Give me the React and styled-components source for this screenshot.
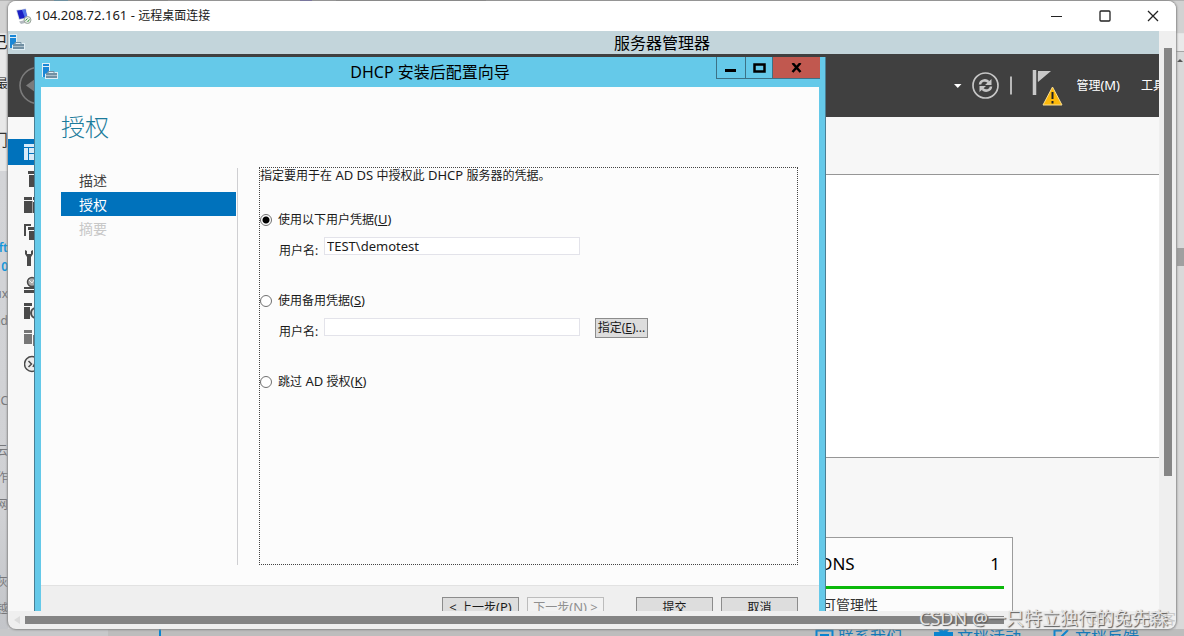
import React from "react";
import styled, { createGlobalStyle } from "styled-components";

const Global = createGlobalStyle`
  * { box-sizing: border-box; }
  html, body { margin: 0; padding: 0; }
  body, button, input {
    font-family: "Noto Sans", "Noto Sans CJK SC", sans-serif;
    font-size: 12px;
    line-height: 16px;
    color: #1a1a1a;
  }
  button { padding: 0; border: 0; background: none; }
  svg { display: block; flex: none; }
`;

const Latin = styled.span`
  font-size: 13px;
  line-height: 12px;
`;

const Desktop = styled.div`
  position: relative;
  display: flex;
  flex-direction: column;
  justify-content: space-between;
  height: 100vh;
  overflow: hidden;
  background: #d0d1d4;
`;

/* ---------- browser page behind the window ---------- */
const TabStrip = styled.div`
  display: flex;
  gap: 24px;
  height: 34px;
  padding-left: 54px;
  background: linear-gradient(#b4b4b4 1px, #d2d2d2 1px);
  border-bottom: 1px solid #e4e4e4;
`;
const TabMark = styled.i`
  width: ${(p) => p.$w}px;
  height: 2px;
  background: ${(p) => p.$c};
`;
const PageBody = styled.div`
  flex: 1;
  display: flex;
  justify-content: space-between;
  align-items: flex-start;
`;
const PageEdge = styled.div`
  width: 8px;
  overflow: hidden;
  white-space: nowrap;
  background: linear-gradient(#e8e8e8 137px, #d3d4d7 137px, #d0d1d4 480px, #c3c5c9);
  height: 100%;
  display: flex;
  flex-direction: column;
`;
const EdgeWord = styled.span`
  display: flex;
  justify-content: flex-end;
  flex: none;
  height: ${(p) => p.$h || 27}px;
  font-size: ${(p) => p.$s || 12}px;
  font-weight: ${(p) => (p.$b ? 600 : 400)};
  color: ${(p) => p.$c || "#77787b"};
`;
const RightEdge = styled.div`
  width: 8px;
  height: 100%;
  display: flex;
  flex-direction: column;
  align-items: center;
  background: linear-gradient(#e9e9e9 17px, #a5a5a5 17px, #a5a5a5 18px, #d9d9d9 18px);
`;
const EdgeArrow = styled.i`
  margin-top: 25px;
  border: 3px solid transparent;
  border-top: 0;
  border-bottom-color: #555;
`;
const EdgeThumb = styled.i`
  width: 7px;
  height: 18px;
  margin-top: 186px;
  background: #a0a0a0;
`;
const PageFoot = styled.div`
  display: flex;
  justify-content: flex-end;
  gap: 32px;
  height: 7px;
  overflow: visible;
  padding-right: 45px;
  background: linear-gradient(90deg, #c7c8ca 108px, #bdbdbd 108px);
`;
const FootMark = styled.i`
  width: 2px;
  margin-right: auto;
  margin-left: 159px;
  background: #0a84cf;
`;
const FootLink = styled.a`
  display: flex;
  align-items: flex-start;
  gap: 4px;
  color: #1479b8;
  font-size: 16px;
  line-height: 16px;
  text-decoration: none;
`;

/* ---------- remote desktop window ---------- */
const RdpWindow = styled.section`
  position: absolute;
  inset: 1px 8px 7px 8px;
  display: flex;
  flex-direction: column;
  overflow: hidden;
  border-radius: 8px;
  background: #efefef;
  box-shadow: 0 0 2px 1px #8b8b8b;
`;
const RdpBar = styled.header`
  display: flex;
  align-items: center;
  gap: 3px;
  height: 30px;
  flex: none;
  padding: 0 17px 0 7px;
  background: #fff;
`;
const RdpTitle = styled.span`
  flex: 1;
`;
const RdpControls = styled.div`
  display: flex;
  gap: 36px;
`;
const IconButton = styled.button`
  display: flex;
  align-items: center;
  justify-content: center;
`;
const RdpMain = styled.div`
  flex: 1;
  display: flex;
  min-height: 0;
`;
const VTrack = styled.div`
  width: 17px;
  flex: none;
  display: flex;
  justify-content: center;
  padding: 17px 0 0 1px;
  background: #efefef;
`;
const VThumb = styled.i`
  width: 8px;
  height: 76%;
  background: #868686;
`;
const HTrack = styled.div`
  display: flex;
  align-items: center;
  gap: 5px;
  height: 18px;
  flex: none;
  padding: 0 172px 0 5px;
`;
const HThumb = styled.i`
  flex: 1;
  height: 8px;
  background: #848484;
`;

/* ---------- server manager ---------- */
const Remote = styled.div`
  position: relative;
  flex: 1;
  display: flex;
  flex-direction: column;
  min-width: 0;
  overflow: hidden;
  background: #f7f7f7;
`;
const ManagerBar = styled.header`
  display: flex;
  align-items: center;
  height: 23px;
  flex: none;
  padding-left: 1px;
  background: #c3d5db;
`;
const ManagerTitle = styled.h1`
  flex: 1;
  margin: 0;
  padding-left: 139px;
  text-align: center;
  font-size: 16px;
  line-height: 22px;
  font-weight: 400;
  color: #000;
`;
const Toolbar = styled.nav`
  display: flex;
  align-items: center;
  justify-content: flex-end;
  height: 63px;
  flex: none;
  overflow: hidden;
  background: #404040;
  color: #fff;
`;
const BackSlot = styled.span`
  margin-right: auto;
  padding-left: 11px;
`;
const FlagSlot = styled.span`
  margin: 4px 13px 0 18px;
`;
const Menu = styled.button`
  flex: none;
  color: #fff;
  font-size: 12px;
  margin-right: 21px;
`;
const ClippedMenu = styled(Menu)`
  width: 18px;
  margin-right: 0;
  overflow: hidden;
  white-space: nowrap;
  text-align: left;
`;
const ManagerBody = styled.div`
  flex: 1;
  display: flex;
  min-height: 0;
`;
const SideNav = styled.nav`
  width: 60px;
  flex: none;
  padding-top: 22px;
  background: #f8f8f8;
`;
const NavList = styled.div`
  display: flex;
  flex-direction: column;
  justify-content: space-between;
  height: 238px;
`;
const NavItem = styled.button`
  display: flex;
  align-items: center;
  width: 100%;
  height: 26px;
  padding-left: 16px;
  background: ${(p) => (p.$active ? "#0072bc" : "transparent")};
`;
const Dashboard = styled.main`
  flex: 1;
  display: flex;
  flex-direction: column;
`;
const Welcome = styled.section`
  height: 284px;
  flex: none;
  margin-top: 57px;
  border: solid #969696;
  border-width: 1px 0;
  background: #fff;
`;
const Tiles = styled.section`
  display: flex;
  justify-content: flex-end;
  padding: 79px 146px 0 0;
`;
const Tile = styled.article`
  width: 220px;
  height: 160px;
  flex: none;
  padding: 12px 8px 0 22px;
  border: 1px solid #9b9b9b;
  background: #fcfcfc;
`;
const TileHead = styled.header`
  display: flex;
  justify-content: space-between;
  height: 39px;
  padding: 0 4px;
  border-bottom: 3px solid #0bb80b;
  font-size: 17px;
  line-height: 28px;
  color: #000;
`;
const TileLink = styled.p`
  margin: 6px 0 0 6px;
  font-size: 14px;
  line-height: 20px;
  color: #333;
`;

/* ---------- wizard ---------- */
const Wizard = styled.section`
  position: absolute;
  left: 26px;
  top: 26px;
  bottom: 0;
  width: 792px;
  display: flex;
  flex-direction: column;
  padding: 0 6px;
  background: #65c9e9;
  border: solid #4a7f95;
  border-width: 0 1px;
`;
const WizardBar = styled.header`
  display: flex;
  align-items: flex-start;
  height: 30px;
  flex: none;
  padding-left: 1px;
  margin-right: -1px;
`;
const WizardIcon = styled.span`
  padding-top: 6px;
`;
const WizardTitle = styled.h2`
  flex: 1;
  margin: 0;
  padding-left: 85px;
  text-align: center;
  font-size: 16px;
  line-height: 30px;
  font-weight: 400;
  color: #000;
`;
const WinControl = styled.button`
  display: flex;
  align-items: center;
  justify-content: center;
  width: ${(p) => p.$w}px;
  height: 22px;
  background: ${(p) => (p.$close ? "#c1584f" : "transparent")};
  border: solid #3c7286;
  border-width: 0 0 1px 1px;
`;
const Sheet = styled.div`
  flex: 1;
  display: flex;
  flex-direction: column;
  min-height: 0;
  background: #fcfcfc;
`;
const SheetTitle = styled.h3`
  margin: 20px 0 0 20px;
  font-size: 24px;
  line-height: 40px;
  font-weight: 300;
  color: #1b7b9b;
`;
const SheetBody = styled.div`
  flex: 1;
  display: flex;
  min-height: 0;
  padding: 20px 21px 20px 20px;
`;
const Steps = styled.ol`
  width: 177px;
  flex: none;
  margin: 1px 21px 0 0;
  padding: 0 1px 0 0;
  list-style: none;
  border-right: 1px solid #cfcfd2;
`;
const Step = styled.li`
  height: 24px;
  padding-left: 18px;
  font-size: 14px;
  line-height: 25px;
  color: ${(p) => (p.$active ? "#fff" : p.$off ? "#c8c8c8" : "#444")};
  background: ${(p) => (p.$active ? "#0072bc" : "transparent")};
`;
const Form = styled.form`
  flex: 1;
  border: 1px dotted #444;
`;
const Intro = styled.p`
  margin: 0 0 27px;
`;
const Choice = styled.label`
  display: flex;
  align-items: center;
  gap: 6px;
  height: 18px;
`;
const Radio = styled.input`
  appearance: none;
  width: 12px;
  height: 12px;
  margin: 0;
  border: 1px solid #707070;
  border-radius: 50%;
  background: #fff;
  &:checked { background: radial-gradient(#000 3px, #fff 4px); }
`;
const Field = styled.div`
  display: flex;
  align-items: flex-start;
  height: 63px;
  padding: 8px 0 0 19px;
`;
const FieldLabel = styled.label`
  width: 45px;
  padding-top: 6px;
`;
const TextBox = styled.input`
  width: 256px;
  height: 18px;
  padding: 0 2px;
  border: 1px solid #e3e3ea;
  background: #fff;
  font-size: 13px;
  line-height: 16px;
`;
const PushButton = styled.button`
  width: ${(p) => p.$w}px;
  height: ${(p) => p.$h}px;
  border: 1px solid #8c8c8c;
  background: #dddddd;
  white-space: nowrap;
  &:disabled { color: #8f8f8f; background: #f2f2f2; border-color: #bcbcbc; }
`;
const SpecifyWrap = styled.span`
  margin-left: 15px;
`;
const WizardFoot = styled.footer`
  display: flex;
  justify-content: flex-end;
  gap: 8px;
  height: 26px;
  flex: none;
  overflow: hidden;
  padding: 11px 21px 0;
  border-top: 1px solid #e2e2e2;
  background: #efefef;
`;
const Spacer = styled.span`
  width: 16px;
`;
const Watermark = styled.div`
  position: absolute;
  right: ${(p) => p.$r}px;
  bottom: ${(p) => p.$b}px;
  font-size: ${(p) => p.$s}px;
  line-height: 24px;
  white-space: nowrap;
  color: ${(p) => p.$c};
  text-shadow: ${(p) => (p.$shadow ? "1px 1px 1px #555" : "none")};
`;

const ServerIcon = () => (
  <svg width="17" height="17" viewBox="0 0 17 17">
    <path d="M0 0h8v9h8v7H3v-2H0z" fill="#dfeef5" />
    <path d="M1 1h6v2H1zM1 4h6v5L3 11v3H1z" fill="#1b87d6" />
    <path d="M4 10h11v5H4z" fill="#7190a3" />
    <path d="M6 10V8.500h6V10" fill="none" stroke="#7190a3" />
    <path d="M4 12.500h11" stroke="#a9bdc9" />
  </svg>
);

const RdpIcon = () => (
  <svg width="17" height="17" viewBox="0 0 17 17">
    <path d="M1 2l10-1.500L13 10l-9 2z" fill="#c9d2e4" />
    <path d="M2 2.500l8.500-1L12 9.500 4.500 11z" fill="#1a1fc4" />
    <path d="M7 2l3.500-.5L12 9.500l-2 .4z" fill="#4f74ea" />
    <path d="M4 13.500l6-1.500 2 2.500-6 1.500z" fill="#b3b9c0" />
    <circle cx="12.500" cy="12" r="3.500" fill="#e3e8e4" stroke="#9aa59c" />
    <path d="M10.500 12.500l2-2m0 3.500l2-2.500" stroke="#3da045" />
  </svg>
);

const BackIcon = () => (
  <svg width="36" height="38" viewBox="0 0 36 38">
    <circle cx="19" cy="18.500" r="18" fill="none" stroke="#7b7b7b" strokeWidth="1.600" />
    <path d="M7 18.500l11-8v16z" fill="#7b7b7b" />
  </svg>
);

const ToolbarIcons = () => (
  <svg width="60" height="28" viewBox="0 0 60 28">
    <path d="M0 12h7.500l-3.750 4z" fill="#fff" />
    <circle cx="31.500" cy="13.500" r="12.500" fill="none" stroke="#c6c6c6" strokeWidth="1.700" />
    <path d="M26 12.500c.3-4 5.500-5.500 8.500-2.500M37 14.500c-.3 4-5.500 5.500-8.500 2.500" fill="none" stroke="#c6c6c6" strokeWidth="2.500" />
    <path d="M37.500 7v6H31zM25.500 20v-6H32z" fill="#c6c6c6" />
    <path d="M57 4.500v18" stroke="#b8b8b8" strokeWidth="2" />
  </svg>
);

const FlagIcon = () => (
  <svg width="31" height="37" viewBox="0 0 31 37">
    <path d="M2.500 1v25" stroke="#c9c9c9" strokeWidth="3.500" />
    <path d="M4 2h15L6 13V2" fill="#c9c9c9" />
    <path d="M5.500 3.500v9" stroke="#555" />
    <path d="M20.500 18L30 36H11z" fill="#fdb90b" stroke="#f7dc92" strokeLinejoin="round" />
    <path d="M20.500 23v7m0 2v2.500" stroke="#222" strokeWidth="2" />
  </svg>
);

const glyphs = [
  { name: "仪表板", art: <path d="M0 1h16v3H0zM0 5h4v12H0zM5 5h5v5H5zM11 5h5v5h-5zM5 11h5v6H5zM11 11h5v6h-5z" fill="#d9ebf8" /> },
  { name: "本地服务器", art: <path d="M4 1h12v3H4zM5 5h11v12H5z" fill="#4a4a4a" /> },
  { name: "所有服务器", art: <path d="M0 1h8v3H0zM9 1h3v3H9zM0 5h8.500v12H0zM9 6h3v11H9z" fill="#4a4a4a" /> },
  { name: "AD DS", art: <path d="M0 1h7v2H2v10H0zM4 4h12v3H4zM5 8h11v9H5z" fill="#4a4a4a" /> },
  { name: "DHCP", art: <path d="M1 1v4l2 3v9h4V8l2-3V1L7 2v3H3V2zM10 13h3v4h-3z" fill="#4a4a4a" /> },
  { name: "DNS", art: <g><path d="M0 11h16v2H0zM0 14h16v3H0z" fill="#4a4a4a" /><circle cx="8" cy="6" r="4.500" fill="#aaa" stroke="#4a4a4a" strokeWidth="1.500" /><path d="M5 4l3 3 2-3" fill="none" stroke="#eee" /></g> },
  { name: "IIS", art: <g><path d="M0 1h8v3H0zM0 5h6v12H0z" fill="#4a4a4a" /><circle cx="12" cy="11" r="5" fill="#ddd" stroke="#4a4a4a" strokeWidth="2" /></g> },
  { name: "NAP", art: <path d="M0 1h8v3H0zM0 5h8v10H0zM9 6h7v11H9z" fill="#777" /> },
  { name: "文件和存储服务", art: <g><circle cx="8" cy="9" r="7.500" fill="#ededed" stroke="#4a4a4a" strokeWidth="1.500" /><path d="M4.500 6l3 3-3 3M9 12l3-6" fill="none" stroke="#4a4a4a" strokeWidth="1.500" /></g> },
];

const NavGlyph = ({ children }) => (
  <svg width="16" height="18" viewBox="0 0 16 18">{children}</svg>
);

const edgeWords = [
  { t: "ft", c: "#1296db", b: true, h: 19 },
  { t: "0", c: "#1296db", b: true },
  { t: "ux" },
  { t: "ad", h: 80 },
  { t: "IC", h: 50 },
  { t: "云" },
  { t: "作" },
  { t: "网", h: 77 },
  { t: "灰" },
  { t: "越" },
];

export default function App() {
  return (
    <>
      <Global />
      <Desktop>
        <TabStrip>
          <TabMark $w={14} $c="#1d9bd7" />
          <TabMark $w={76} $c="#888" />
          <TabMark $w={84} $c="transparent" />
          <TabMark $w={12} $c="#4a3fd0" />
          <TabMark $w={150} $c="#888" />
        </TabStrip>
        <PageBody>
          <PageEdge>
            <EdgeWord $s={16} $h={42} $c="#222">已</EdgeWord>
            <EdgeWord $s={12} $h={56} $c="#222">最</EdgeWord>
            <EdgeWord $s={16} $h={108} $c="#333">入门</EdgeWord>
            {edgeWords.map((w) => (
              <EdgeWord key={w.t} $c={w.c} $b={w.b} $h={w.h}>{w.t}</EdgeWord>
            ))}
          </PageEdge>
          <RightEdge><EdgeArrow /><EdgeThumb /></RightEdge>
        </PageBody>
        <PageFoot>
          <FootMark />
          <FootLink href="#contact">
            <svg width="19" height="16" viewBox="0 0 19 16"><path d="M1.500 1.500h16v12h-16zM5 6h9" fill="none" stroke="#0a84cf" strokeWidth="2" /></svg>
            联系我们
          </FootLink>
          <FootLink href="#events">
            <svg width="19" height="16" viewBox="0 0 19 16"><path d="M0 3h19v4H0zM1 8h17v7H1z" fill="#0a84cf" /><path d="M9.500 3C5-2 3 2 9.500 3c6.500-1 4.500-5 0 0" fill="none" stroke="#0a84cf" strokeWidth="2" /></svg>
            文档活动
          </FootLink>
          <FootLink href="#feedback">
            <svg width="18" height="16" viewBox="0 0 18 16"><path d="M9 1.500H1.500v13h13V8M6 10l9-9" fill="none" stroke="#0a84cf" strokeWidth="2" /></svg>
            文档反馈
          </FootLink>
        </PageFoot>

        <RdpWindow>
          <RdpBar>
            <RdpIcon />
            <RdpTitle><Latin>104.208.72.161 - </Latin>远程桌面连接</RdpTitle>
            <RdpControls>
              <IconButton aria-label="最小化"><svg width="12" height="12"><path d="M0 6.500h11" stroke="#222" /></svg></IconButton>
              <IconButton aria-label="最大化"><svg width="12" height="12"><rect x="1" y="1" width="10" height="10" rx="1" fill="none" stroke="#222" strokeWidth="1.300" /></svg></IconButton>
              <IconButton aria-label="关闭"><svg width="12" height="12"><path d="M1 1l10 10M11 1L1 11" stroke="#222" strokeWidth="1.300" /></svg></IconButton>
            </RdpControls>
          </RdpBar>
          <RdpMain>
            <Remote>
              <ManagerBar>
                <ServerIcon />
                <ManagerTitle>服务器管理器</ManagerTitle>
              </ManagerBar>
              <Toolbar>
                <BackSlot><BackIcon /></BackSlot>
                <ToolbarIcons />
                <FlagSlot><FlagIcon /></FlagSlot>
                <Menu>管理<Latin>(M)</Latin></Menu>
                <ClippedMenu>工具(T)</ClippedMenu>
              </Toolbar>
              <ManagerBody>
                <SideNav>
                  <NavList>
                    {glyphs.map((g, i) => (
                      <NavItem key={g.name} $active={i === 0} aria-label={g.name}>
                        <NavGlyph>{g.art}</NavGlyph>
                      </NavItem>
                    ))}
                  </NavList>
                </SideNav>
                <Dashboard>
                  <Welcome />
                  <Tiles>
                    <Tile>
                      <TileHead><span>DNS</span><span>1</span></TileHead>
                      <TileLink>可管理性</TileLink>
                    </Tile>
                  </Tiles>
                </Dashboard>
              </ManagerBody>

              <Wizard>
                <WizardBar>
                  <WizardIcon><ServerIcon /></WizardIcon>
                  <WizardTitle>DHCP 安装后配置向导</WizardTitle>
                  <WinControl $w={29} aria-label="最小化"><svg width="12" height="10"><path d="M0 7.500h11" stroke="#000" strokeWidth="3" /></svg></WinControl>
                  <WinControl $w={27} aria-label="最大化"><svg width="13" height="10"><path d="M1.500 1.500h10v7h-10z" fill="none" stroke="#000" strokeWidth="2.500" /></svg></WinControl>
                  <WinControl $w={48} $close aria-label="关闭"><svg width="12" height="10"><path d="M1.500 0l8 9M9.500 0l-8 9" stroke="#000" strokeWidth="2.500" /></svg></WinControl>
                </WizardBar>
                <Sheet>
                  <SheetTitle>授权</SheetTitle>
                  <SheetBody>
                    <Steps>
                      <Step>描述</Step>
                      <Step $active>授权</Step>
                      <Step $off>摘要</Step>
                    </Steps>
                    <Form>
                      <Intro>指定要用于在<Latin> AD DS </Latin>中授权此<Latin> DHCP </Latin>服务器的凭据。</Intro>
                      <Choice><Radio type="radio" name="cred" defaultChecked /><span>使用以下用户凭据<Latin>(<u>U</u>)</Latin></span></Choice>
                      <Field>
                        <FieldLabel htmlFor="user1">用户名:</FieldLabel>
                        <TextBox id="user1" defaultValue="TEST\demotest" />
                      </Field>
                      <Choice><Radio type="radio" name="cred" /><span>使用备用凭据<Latin>(<u>S</u>)</Latin></span></Choice>
                      <Field>
                        <FieldLabel htmlFor="user2">用户名:</FieldLabel>
                        <TextBox id="user2" />
                        <SpecifyWrap><PushButton type="button" $w={53} $h={20}>指定(<u>E</u>)...</PushButton></SpecifyWrap>
                      </Field>
                      <Choice><Radio type="radio" name="cred" /><span>跳过<Latin> AD </Latin>授权<Latin>(<u>K</u>)</Latin></span></Choice>
                    </Form>
                  </SheetBody>
                  <WizardFoot>
                    <PushButton $w={77} $h={22}><Latin>&lt; </Latin>上一步<Latin>(P)</Latin></PushButton>
                    <PushButton $w={77} $h={22} disabled>下一步<Latin>(N) &gt;</Latin></PushButton>
                    <Spacer />
                    <PushButton $w={77} $h={22}>提交</PushButton>
                    <PushButton $w={77} $h={22}>取消</PushButton>
                  </WizardFoot>
                </Sheet>
              </Wizard>
            </Remote>
            <VTrack><VThumb /></VTrack>
          </RdpMain>
          <HTrack>
            <svg width="7" height="8"><path d="M7 0v8L1 4z" fill="#dcdcdc" /></svg>
            <HThumb />
          </HTrack>
        </RdpWindow>
        <Watermark $r={8} $b={6} $s={15} $c="#c9c9c9">@51CTO博客</Watermark>
        <Watermark $r={16} $b={6} $s={18} $c="#e4e4e4" $shadow>CSDN @一只特立独行的兔先森</Watermark>
      </Desktop>
    </>
  );
}
